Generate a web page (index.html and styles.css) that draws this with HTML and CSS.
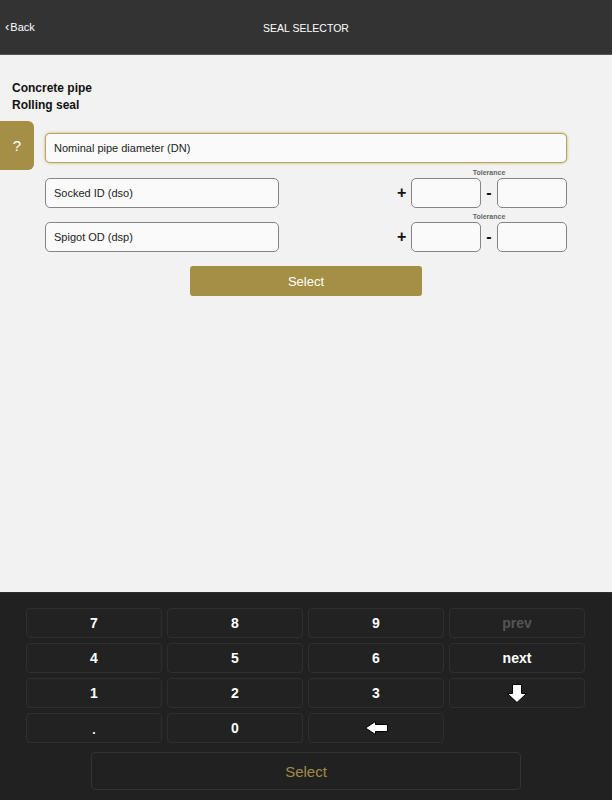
FILE: index.html
```html
<!DOCTYPE html>
<html>
<head>
<meta charset="utf-8">
<link rel="stylesheet" href="styles.css">
</head>
<body>
<div class="app">
  <header class="topbar">
    <div class="back"><span class="chev">&#8249;</span>Back</div>
    <div class="title">SEAL SELECTOR</div>
  </header>
  <main class="content">
    <div class="titles">
      <div>Concrete pipe</div>
      <div>Rolling seal</div>
    </div>
    <div class="row-dn">
      <div class="help">?</div>
      <div class="field field-dn">Nominal pipe diameter (DN)</div>
    </div>
    <div class="row-tol">
      <div class="field field-left">Socked ID (dso)</div>
      <div class="tol">
        <div class="tol-label">Tolerance</div>
        <div class="tol-inputs">
          <span class="sign">+</span><div class="field field-small"></div>
          <span class="sign minus">-</span><div class="field field-small"></div>
        </div>
      </div>
    </div>
    <div class="row-tol row-tol2">
      <div class="field field-left">Spigot OD (dsp)</div>
      <div class="tol">
        <div class="tol-label">Tolerance</div>
        <div class="tol-inputs">
          <span class="sign">+</span><div class="field field-small"></div>
          <span class="sign minus">-</span><div class="field field-small"></div>
        </div>
      </div>
    </div>
    <div class="select-wrap"><div class="btn-select">Select</div></div>
  </main>
  <section class="keypad">
    <div class="keys">
      <div class="key">7</div>
      <div class="key">8</div>
      <div class="key">9</div>
      <div class="key key-dim">prev</div>
      <div class="key">4</div>
      <div class="key">5</div>
      <div class="key">6</div>
      <div class="key">next</div>
      <div class="key">1</div>
      <div class="key">2</div>
      <div class="key">3</div>
      <div class="key"><svg width="20" height="19" viewBox="0 0 20 19"><polygon points="5.5,0.5 14.5,0.5 14.5,9.5 19.5,9.5 10,18.5 0.5,9.5 5.5,9.5" fill="#fff" stroke="#000" stroke-width="1"/></svg></div>
      <div class="key key-dot">.</div>
      <div class="key">0</div>
      <div class="key"><svg width="23" height="14" viewBox="0 0 23 14"><polygon points="0.5,7 10.5,0.5 10.5,3.5 22.5,3.5 22.5,10.5 10.5,10.5 10.5,13.5" fill="#fff" stroke="#000" stroke-width="1"/></svg></div>
      <div class="key-empty"></div>
    </div>
    <div class="kp-select">Select</div>
  </section>
</div>
</body>
</html>
```

FILE: styles.css
```css
* { box-sizing: border-box; }
html, body { margin: 0; padding: 0; }
body {
  width: 612px;
  height: 800px;
  font-family: "Liberation Sans", Arial, sans-serif;
  background: #f2f2f2;
  overflow: hidden;
}
.app {
  display: flex;
  flex-direction: column;
  height: 800px;
}
.topbar {
  height: 55px;
  flex: none;
  background: #333333;
  border-bottom: 1px solid #555555;
  display: flex;
  align-items: center;
  justify-content: center;
  position: relative;
  color: #ffffff;
}
.back {
  position: absolute;
  left: 5px;
  top: 20px;
  font-size: 11px;
  line-height: 14px;
  color: #ffffff;
}
.chev {
  font-size: 13px;
  margin-right: 1px;
}
.title {
  font-size: 10.5px;
  padding-top: 1px;
  letter-spacing: 0;
}
.content {
  flex: 1;
  padding-top: 25px;
}
.titles {
  padding-left: 12px;
  font-weight: bold;
  font-size: 12px;
  line-height: 17px;
  color: #111111;
}
.row-dn {
  margin-top: 7px;
  display: flex;
  align-items: flex-start;
}
.help {
  width: 34px;
  height: 49px;
  background: #a58f45;
  border-radius: 0 6px 6px 0;
  color: #ffffff;
  font-size: 15px;
  display: flex;
  align-items: center;
  justify-content: center;
}
.field {
  height: 30px;
  background: #fafafa;
  border: 1px solid #858585;
  border-radius: 5px;
  font-size: 11px;
  color: #222222;
  display: flex;
  align-items: center;
  padding-left: 8px;
}
.field-dn {
  margin-left: 11px;
  margin-top: 12px;
  width: 522px;
  border-color: #b9a45a;
  box-shadow: 0 0 3px #c4b26a;
}
.row-tol {
  margin-top: -2px;
  padding: 0 45px;
  display: flex;
  align-items: flex-end;
  justify-content: space-between;
}
.row-tol2 { margin-top: 4px; }
.field-left { width: 234px; }
.tol {
  display: flex;
  flex-direction: column;
}
.tol-label {
  height: 10px;
  line-height: 10px;
  padding-left: 14px;
  text-align: center;
  font-size: 7px;
  font-weight: bold;
  color: #666666;
}
.tol-inputs {
  display: flex;
  align-items: center;
}
.sign {
  width: 14px;
  text-align: left;
  font-size: 16px;
  font-weight: bold;
  color: #111111;
}
.sign.minus {
  width: 16px;
  text-align: center;
}
.field-small { width: 70px; }
.select-wrap {
  margin-top: 14px;
  display: flex;
  justify-content: center;
}
.btn-select {
  width: 232px;
  height: 30px;
  background: #a58f45;
  border-radius: 3px;
  color: #ffffff;
  font-size: 13px;
  display: flex;
  align-items: center;
  justify-content: center;
}
.keypad {
  height: 208px;
  flex: none;
  background: #212121;
  border-top: 1px solid #2c2c2c;
  padding-top: 15px;
}
.keys {
  display: grid;
  grid-template-columns: repeat(4, 136px);
  grid-auto-rows: 30px;
  column-gap: 5px;
  row-gap: 5px;
  padding-left: 26px;
}
.key {
  border: 1px solid #2f2f2f;
  border-radius: 4px;
  background: #222222;
  color: #ffffff;
  font-weight: bold;
  font-size: 14px;
  display: flex;
  align-items: center;
  justify-content: center;
}
.key-dim { color: #555555; }
.key-dot { font-size: 12px; padding-top: 4px; }
.kp-select {
  margin: 9px auto 0;
  width: 430px;
  height: 38px;
  border: 1px solid #333333;
  border-radius: 4px;
  color: #a08c47;
  font-size: 15px;
  display: flex;
  align-items: center;
  justify-content: center;
}
```
